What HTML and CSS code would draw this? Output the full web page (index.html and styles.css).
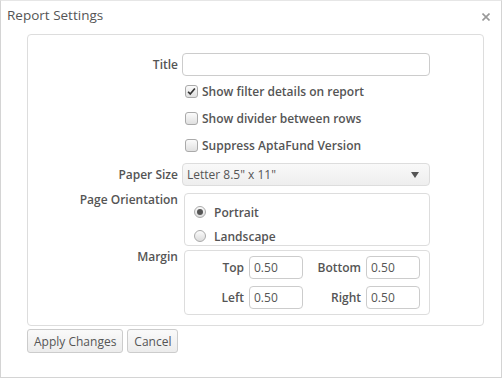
FILE: index.html
```html
<!DOCTYPE html>
<html lang="en">
<head>
  <meta charset="UTF-8">
  <title>Report Settings</title>
  <link rel="stylesheet" href="styles.css">
</head>
<body>
  <div class="dialog">
    <div class="dialog-header">
      <span class="dialog-title">Report Settings</span>
      <svg class="close" viewBox="0 0 8 8" width="8" height="8"><path d="M0.5 0.5 L7.5 7.5 M7.5 0.5 L0.5 7.5" stroke="#999" stroke-width="1.6"/></svg>
    </div>
    <div class="panel">
      <div class="row">
        <label class="label">Title</label>
        <input type="text" class="text-field wide">
      </div>
      <div class="row check-row">
        <span class="label"></span>
        <span class="check checked"><svg viewBox="0 0 13 13" width="13" height="13"><path d="M2.5 6.8 L5 9.5 L10.5 3" fill="none" stroke="#333" stroke-width="2"/></svg></span>
        <span class="check-text">Show filter details on report</span>
      </div>
      <div class="row check-row">
        <span class="label"></span>
        <span class="check"></span>
        <span class="check-text">Show divider between rows</span>
      </div>
      <div class="row check-row">
        <span class="label"></span>
        <span class="check"></span>
        <span class="check-text">Suppress AptaFund Version</span>
      </div>
      <div class="row select-row">
        <label class="label">Paper Size</label>
        <div class="select">
          <span>Letter 8.5" x 11"</span>
          <svg viewBox="0 0 8 6" width="8" height="6"><path d="M0 0 H8 L4 6 Z" fill="#555"/></svg>
        </div>
      </div>
      <div class="row group-row">
        <label class="label">Page Orientation</label>
        <div class="group orient">
          <div class="radio-line"><span class="radio on"></span>Portrait</div>
          <div class="radio-line"><span class="radio"></span>Landscape</div>
        </div>
      </div>
      <div class="row group-row margin-row">
        <label class="label">Margin</label>
        <div class="group margins">
          <span class="m-label">Top</span><input class="text-field small" value="0.50">
          <span class="m-label">Bottom</span><input class="text-field small" value="0.50">
          <span class="m-label">Left</span><input class="text-field small" value="0.50">
          <span class="m-label">Right</span><input class="text-field small" value="0.50">
        </div>
      </div>
    </div>
    <div class="actions">
      <button class="btn">Apply Changes</button>
      <button class="btn">Cancel</button>
    </div>
  </div>
</body>
</html>
```

FILE: styles.css
```css
body {
  margin: 0;
  font-family: 'Open Sans', 'Segoe UI', sans-serif;
  font-size: 12px;
  color: #555;
  background: #fff;
}

.dialog {
  width: 500px;
  height: 376px;
  border: 1px solid #d4d4d4;
  border-top-color: #e6e6e6;
  box-sizing: content-box;
}

.dialog-header {
  display: flex;
  justify-content: space-between;
  align-items: center;
  height: 30px;
  padding: 0 11px 0 6px;
}

.dialog-title {
  font-size: 13.5px;
  color: #555;
  margin-top: -2px;
}

.close {
  margin-top: 1px;
}

.panel {
  margin: 3px 0 0 26px;
  width: 402px;
  border: 1px solid #ddd;
  border-radius: 4px;
  padding: 18px 53px 10px 0;
}

.row {
  display: flex;
  align-items: center;
}

.label {
  width: 150px;
  flex: none;
  text-align: right;
  padding-right: 4px;
  font-weight: 600;
  color: #555;
}

.text-field {
  font-family: inherit;
  font-size: 12px;
  color: #555;
  border: 1px solid #ccc;
  border-radius: 4px;
  height: 23px;
  box-sizing: border-box;
  padding: 0 4px;
  margin: 0;
  outline: none;
}

.wide {
  width: 249px;
}

.check-row {
  height: 27px;
}

.check-row:nth-child(2) {
  margin-top: 2px;
}

.check {
  width: 13px;
  height: 13px;
  margin-left: 3px;
  border: 1px solid #aaa;
  border-radius: 3px;
  background: linear-gradient(#fbfbfb, #e0e0e0);
  box-sizing: border-box;
  display: flex;
  align-items: center;
  justify-content: center;
}

.check svg {
  width: 11px;
  height: 11px;
}

.check-text {
  margin-left: 4px;
  font-weight: 600;
}

.select-row {
  margin-top: 4px;
}

.select {
  width: 249px;
  height: 23px;
  box-sizing: border-box;
  border: 1px solid #ddd;
  border-radius: 4px;
  background: linear-gradient(#f9f9f9, #eeeeee);
  display: flex;
  align-items: center;
  justify-content: space-between;
  padding: 0 10px 0 4px;
  color: #555;
}

.group-row {
  align-items: flex-start;
  margin-top: 7px;
}

.group-row .label {
  margin-top: -2px;
}

.margin-row {
  margin-top: 4px;
}

.group {
  margin-left: 2px;
  width: 247px;
  box-sizing: border-box;
  border: 1px solid #ddd;
  border-radius: 4px;
}

.orient {
  height: 53px;
  padding: 6px 0 0 9px;
}

.radio-line {
  display: flex;
  align-items: center;
  height: 24px;
  font-weight: 600;
}

.radio {
  width: 12px;
  height: 12px;
  border: 1px solid #aaa;
  border-radius: 50%;
  box-sizing: border-box;
  background: linear-gradient(#fbfbfb, #dcdcdc);
  margin-right: 8px;
  display: flex;
  align-items: center;
  justify-content: center;
}

.radio.on::after {
  content: "";
  width: 6px;
  height: 6px;
  border-radius: 50%;
  background: #555;
}

.margins {
  height: 65px;
  display: grid;
  grid-template-columns: 59px 54px 53px 54px;
  grid-auto-rows: 23px;
  align-content: start;
  column-gap: 5px;
  row-gap: 7px;
  padding: 5px 0 0 0;
  align-items: center;
}

.m-label {
  text-align: right;
  font-weight: 600;
}

.small {
  width: 54px;
}

.actions {
  margin: 3px 0 0 26px;
  display: flex;
  gap: 4px;
}

.btn {
  font-family: inherit;
  font-size: 12px;
  color: #555;
  height: 24px;
  padding: 0 6px;
  margin: 0;
  border: 1px solid #ccc;
  border-radius: 3px;
  background: linear-gradient(#fafafa, #ececec);
}
```
